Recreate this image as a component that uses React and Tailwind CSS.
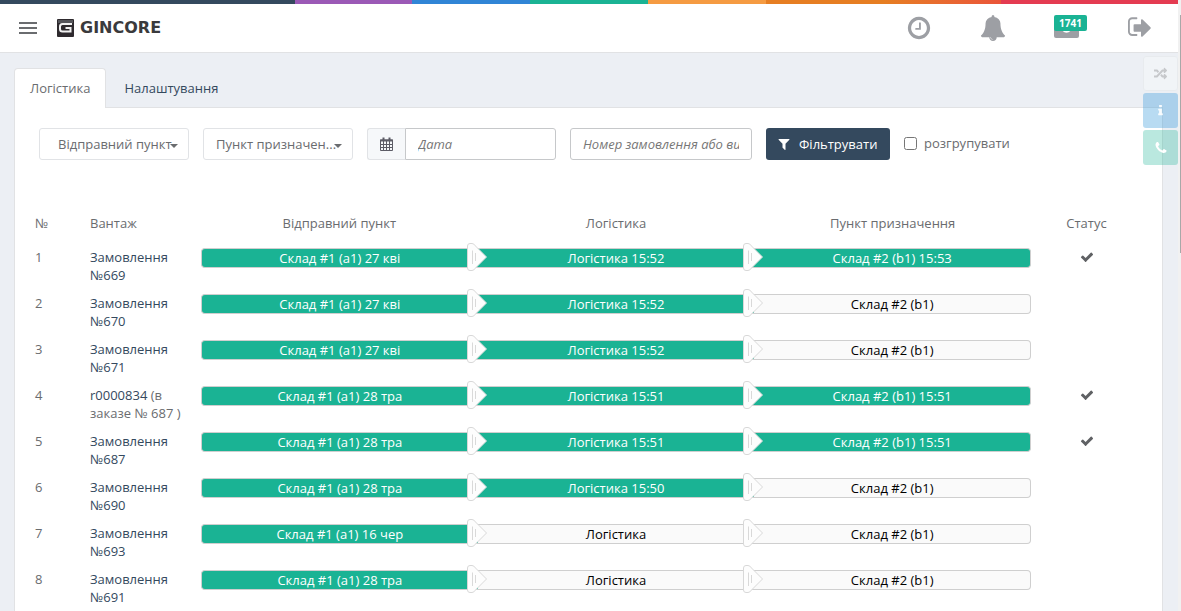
import { FaRandom } from 'react-icons/fa';

const icons = {
  clock:
    'M1024 544v448q0 14-9 23t-23 9h-320q-14 0-23-9t-9-23v-64q0-14 9-23t23-9h224v-352q0-14 9-23t23-9h64q14 0 23 9t9 23zm416 352q0-148-73-273t-198-198-273-73-273 73-198 198-73 273 73 273 198 198 273 73 273-73 198-198 73-273zm224 0q0 209-103 385.500t-279.500 279.500-385.500 103-385.500-103-279.500-279.500-103-385.500 103-385.500 279.500-279.500 385.500-103 385.500 103 279.500 279.500 103 385.500z',
  bell:
    'M912 1696q0-16-16-16-59 0-101.500-42.500t-42.500-101.500q0-16-16-16t-16 16q0 73 51.500 124.500t124.500 51.500q16 0 16-16zm816-288q0 52-38 90t-90 38h-448q0 106-75 181t-181 75-181-75-75-181h-448q-52 0-90-38t-38-90q50-42 91-88t85-119.500 74.500-158.500 50-206 19.500-260q0-152 117-282.500t307-158.500q-8-19-8-39 0-40 28-68t68-28 68 28 28 68q0 20-8 39 190 28 307 158.500t117 282.500q0 139 19.500 260t50 206 74.500 158.500 85 119.500 91 88z',
  signOut:
    'M640 1344q0 4 1 20t.5 26.500-3 23.500-10 19.500-20.500 6.500h-320q-119 0-203.500-84.500t-84.500-203.500v-704q0-119 84.500-203.500t203.500-84.500h320q13 0 22.500 9.500t9.500 22.500q0 4 1 20t.5 26.500-3 23.500-10 19.500-20.500 6.500h-320q-66 0-113 47t-47 113v704q0 66 47 113t113 47h312l11.500 1 11.500 3 8 5.500 7 9 2 13.500zm928-448q0 26-19 45l-544 544q-19 19-45 19t-45-19-19-45v-288h-448q-26 0-45-19t-19-45v-384q0-26 19-45t45-19h448v-288q0-26 19-45t45-19 45 19l544 544q19 19 19 45z',
  filter:
    'M1595 295q17 41-14 70l-493 493v742q0 42-39 59-13 5-25 5-27 0-45-19l-256-256q-19-19-19-45v-486l-493-493q-31-29-14-70 17-39 59-39h1280q42 0 59 39z',
  check:
    'M1671 566q0 40-28 68l-724 724-136 136q-28 28-68 28t-68-28l-136-136-362-362q-28-28-28-68t28-68l136-136q28-28 68-28t68 28l294 295 656-657q28-28 68-28t68 28l136 136q28 28 28 68z',
  info:
    'M1216 1344v128q0 26-19 45t-45 19h-512q-26 0-45-19t-19-45v-128q0-26 19-45t45-19h64v-384h-64q-26 0-45-19t-19-45v-128q0-26 19-45t45-19h384q26 0 45 19t19 45v576h64q26 0 45 19t19 45zm-128-1152v192q0 26-19 45t-45 19h-256q-26 0-45-19t-19-45v-192q0-26 19-45t45-19h256q26 0 45 19t19 45z',
  phone:
    'M1600 1240q0 27-10 70.500t-21 68.500q-21 50-122 106-94 51-186 51-27 0-53-3.500t-57.500-12.500-47-14.500-55.500-20.500-49-18q-98-35-175-83-127-79-264-216t-216-264q-48-77-83-175-3-9-18-49t-20.500-55.500-14.500-47-12.500-57.500-3.500-53q0-92 51-186 56-101 106-122 25-11 68.500-21t70.500-10q14 0 21 3 18 6 53 76 11 19 30 54t35 63.500 31 53.500q3 4 17.500 25t21.500 35.500 7 28.500q0 20-28.500 50t-62 55-62 53-28.500 46q0 9 5 22.500t8.500 20.500 14 24 11.500 19q76 137 174 235t235 174q2 1 19 11.500t24 14 20.500 8.500 22.500 5q18 0 46-28.500t53-62 55-62 50-28.500q14 0 28.500 7t35.500 21.500 25 17.500q25 15 53.500 31t63.500 35 54 30q70 35 76 53 3 7 3 21z',
};

function Icon({ name, className }) {
  return (
    <svg viewBox="0 0 1792 1792" fill="currentColor" className={className} aria-hidden="true">
      <path d={icons[name]} />
    </svg>
  );
}

const rows = [
  { id: 1, order: 'Замовлення №669', from: '27 кві', way: '15:52', to: '15:53' },
  { id: 2, order: 'Замовлення №670', from: '27 кві', way: '15:52' },
  { id: 3, order: 'Замовлення №671', from: '27 кві', way: '15:52' },
  { id: 4, order: 'r0000834', note: '(в заказе № 687 )', from: '28 тра', way: '15:51', to: '15:51' },
  { id: 5, order: 'Замовлення №687', from: '28 тра', way: '15:51', to: '15:51' },
  { id: 6, order: 'Замовлення №690', from: '28 тра', way: '15:50' },
  { id: 7, order: 'Замовлення №693', from: '16 чер' },
  { id: 8, order: 'Замовлення №691', from: '28 тра' },
];

function Logo() {
  return (
    <a href="#home" className="flex items-center gap-[6px] text-[#3a3a3c]" aria-label="Gincore">
      <svg width="17" height="18" viewBox="0 0 17 18" aria-hidden="true">
        <rect width="17" height="18" rx="1" fill="#2e2a2e" />
        <rect x="1" y="1" width="15" height="3" fill="#55555a" />
        <path d="M15 5H5.500Q3 5 3 7.500V10Q3 12.500 5.500 12.500H13.500V9H8.500" fill="none" stroke="#f2f2f2" strokeWidth="2" />
      </svg>
      <span className="font-['DejaVu_Sans'] text-[16px] leading-4 font-bold">GINCORE</span>
    </a>
  );
}

function Header() {
  return (
    <header className="border-b border-[#e1e2e4] bg-white">
      <div className="flex h-1">
        <div className="w-1/4 bg-[#34495e]" />
        <div className="w-1/10 bg-[#9b59b6]" />
        <div className="w-1/10 bg-[#3085d6]" />
        <div className="w-1/10 bg-[#1ab394]" />
        <div className="w-1/10 bg-[#f59b42]" />
        <div className="w-1/10 bg-[#e67e22]" />
        <div className="w-1/10 bg-linear-to-r from-[#e67e22] to-[#ea5439]" />
        <div className="flex-1 bg-[#e43b51]" />
      </div>
      <div className="flex h-12 items-center">
        <button type="button" aria-label="Меню" className="mr-5 ml-[19px] flex w-[18px] flex-col gap-[3px]">
          <span className="h-[2px] bg-[#6a6c6f]" />
          <span className="h-[2px] bg-[#6a6c6f]" />
          <span className="h-[2px] bg-[#6a6c6f]" />
        </button>
        <Logo />
        <nav className="ml-auto flex text-[#9d9fa4]">
          <a href="#time" aria-label="Час" className="flex w-[74px] justify-center">
            <Icon name="clock" className="size-[26px]" />
          </a>
          <a href="#alerts" aria-label="Сповіщення" className="flex w-[74px] justify-center">
            <Icon name="bell" className="size-[26px]" />
          </a>
          <a href="#mail" className="relative flex w-[74px] justify-center">
            <svg width="26" height="24" viewBox="0 0 26 24" fill="currentColor" aria-hidden="true">
              <path d="M0 2H25V21Q25 23 23 23H2Q0 23 0 21Z" />
              <path d="M9 15Q12.500 18.500 16 15" fill="none" stroke="#fff" strokeWidth="2" />
            </svg>
            <span className="absolute top-0 left-6 rounded-xs bg-[#1ab394] px-[5px] text-[10px] leading-4 font-bold text-white">1741</span>
          </a>
          <a href="#logout" aria-label="Вихід" className="flex w-[74px] justify-center">
            <Icon name="signOut" className="size-[26px]" />
          </a>
        </nav>
      </div>
    </header>
  );
}

function PointSelect({ label, text, className }) {
  return (
    <div className="relative w-[150px]">
      <select
        aria-label={label}
        className={`h-8 w-full appearance-none rounded-[3px] border border-[#e1e3e6] bg-white ${className}`}
      >
        <option>{text}</option>
      </select>
      <svg width="8" height="4" viewBox="0 0 8 4" className="pointer-events-none absolute top-4 right-[11px]" aria-hidden="true">
        <path d="M0 0H8L4 4Z" fill="#6a6c6f" />
      </svg>
    </div>
  );
}

function Filters() {
  return (
    <form className="flex gap-[14px] pt-5 pl-6">
      <PointSelect label="Відправний пункт" text="Відправний пункт" className="pl-[18px]" />
      <PointSelect label="Пункт призначення" text="Пункт призначен..." className="pl-3" />
      <div className="flex w-[189px]">
        <span className="flex w-[38px] shrink-0 items-center justify-center rounded-l-[3px] border border-r-0 border-[#e1e3e6] bg-[#f6f8fa]">
          <svg width="13" height="14" viewBox="0 0 13 14" fill="none" stroke="#5c5c66" aria-hidden="true">
            <path d="M.5 3V13.500H12.500V3ZM.5 7.500H12.500M.5 10.500H12.500M3.500 4V13.500M6.500 4V13.500M9.500 4V13.500" />
            <path d="M0 3.500H13" strokeWidth="2" />
            <path d="M3.500 .5V3M9.500 .5V3" strokeWidth="2" />
          </svg>
        </span>
        <input
          type="text"
          aria-label="Дата"
          placeholder="Дата"
          className="h-8 w-full min-w-0 rounded-r-[3px] border border-[#c6c8ca] bg-white px-3 placeholder:text-[#777] placeholder:italic"
        />
      </div>
      <input
        type="text"
        aria-label="Номер замовлення"
        placeholder="Номер замовлення або видача"
        className="h-8 w-[182px] rounded-[3px] border border-[#c6c8ca] bg-white px-3 placeholder:text-[#777] placeholder:italic"
      />
      <button type="submit" className="flex h-8 w-[124px] items-center gap-2 rounded-[3px] bg-[#34495e] pl-[11px] text-white">
        <Icon name="filter" className="size-[14px]" />
        Фільтрувати
      </button>
      <label className="flex h-[30px] items-center gap-[7px]">
        <input type="checkbox" className="size-[13px]" />
        розгрупувати
      </label>
    </form>
  );
}

// Grip that closes a finished leg and points to the next one
function Handle() {
  return (
    <svg width="20" height="28" viewBox="0 0 20 28" className="absolute top-0 -right-[9px] z-10" aria-hidden="true">
      <path
        d="M3 .5H5Q7 .5 8.500 3L19.500 14L8.500 25Q7 27.500 5 27.500H3Q.5 27.500 .5 25V3Q.5 .5 3 .5Z"
        fill="#fdfdfd"
        stroke="#d8d8d8"
      />
      <path d="M5.500 7.500V21M8.500 10V18" fill="none" stroke="#d9d9d9" />
    </svg>
  );
}

function Leg({ done, edge, handle, children }) {
  return (
    <td className="p-0 align-top">
      <div className="relative py-[5px]">
        <div
          className={`h-5 border-y border-[#cfcfcf] text-center ${done ? 'bg-[#1ab394] text-white' : 'bg-[#fafafa] text-black'} ${edge}`}
        >
          {children}
        </div>
        {handle && <Handle />}
      </div>
    </td>
  );
}

function LogisticsTable() {
  return (
    <table className="w-full table-fixed border-collapse">
      <colgroup>
        <col className="w-[55px]" />
        <col className="w-[119px]" />
        <col />
        <col />
        <col />
        <col className="w-[111px]" />
      </colgroup>
      <thead>
        <tr className="h-[41px] text-center">
          <th className="px-2 text-left font-normal">№</th>
          <th className="px-2 text-left font-normal">Вантаж</th>
          <th className="font-normal">Відправний пункт</th>
          <th className="font-normal">Логістика</th>
          <th className="font-normal">Пункт призначення</th>
          <th className="font-normal">Статус</th>
        </tr>
      </thead>
      <tbody>
        {rows.map((row) => (
          <tr key={row.id} className="h-[46px]">
            <td className="px-2 py-[5px] align-top">{row.id}</td>
            <td className="py-[5px] pr-4 pl-2 align-top">
              <a href={`#order-${row.id}`} className="text-[#34495e]">{row.order}</a>
              {row.note && ` ${row.note}`}
            </td>
            <Leg done edge="rounded-l-[4px] border-l" handle>
              Склад #1 (a1) {row.from}
            </Leg>
            <Leg done={!!row.way} edge="" handle>
              Логістика {row.way}
            </Leg>
            <Leg done={!!row.to} edge="rounded-r-[4px] border-r">
              Склад #2 (b1) {row.to}
            </Leg>
            <td className="py-[7px] align-top">
              {row.to && <Icon name="check" className="mx-auto size-[14px] text-[#5f6164]" />}
            </td>
          </tr>
        ))}
      </tbody>
    </table>
  );
}

function SideButtons() {
  return (
    <div className="fixed top-14 right-[3px] z-20 flex flex-col gap-[2px]">
      <button type="button" aria-label="Перемкнути" className="flex size-[35px] items-center justify-center rounded-[3px] border border-[#e8ebee] bg-[#f1f4f7] text-[#c6c8cb]">
        <FaRandom size={13} />
      </button>
      <button type="button" aria-label="Інформація" className="flex size-[35px] items-center justify-center rounded-[3px] bg-[#3498db]/35 text-white/90">
        <Icon name="info" className="size-[13px]" />
      </button>
      <button type="button" aria-label="Подзвонити" className="flex size-[35px] items-center justify-center rounded-[3px] bg-[#1ab394]/30 text-white">
        <Icon name="phone" className="size-[14px]" />
      </button>
    </div>
  );
}

export default function App() {
  return (
    <div className="flex h-screen overflow-hidden bg-[#eceff4] font-['Open_Sans',sans-serif] text-[13px] leading-[18px] text-[#6a6c6f]">
      <div className="min-w-0 flex-1">
        <Header />
        <main className="pt-[15px] pr-[15px] pl-[14px]">
          <nav className="flex h-[39px] gap-[2px]">
            <a href="#logistics" className="relative z-10 h-10 rounded-t-[4px] border border-b-0 border-[#e1e2e4] bg-white px-[15px] py-[10px]">
              Логістика
            </a>
            <a href="#settings" className="px-4 py-[11px] text-[#34495e]">Налаштування</a>
          </nav>
          <section className="border border-[#e1e2e4] bg-white">
            <Filters />
            <div className="pt-[42px] pr-5 pl-3">
              <LogisticsTable />
            </div>
          </section>
        </main>
      </div>
      <SideButtons />
      {/* Scroll track */}
      <div className="flex w-[3px] justify-end bg-[#f1f1f1] pt-[15px]">
        <div className="h-[238px] w-px bg-[#a8a8a8]" />
      </div>
    </div>
  );
}
